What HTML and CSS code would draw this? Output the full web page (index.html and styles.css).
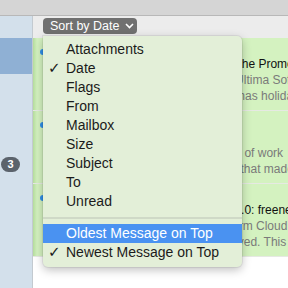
FILE: index.html
```html
<!DOCTYPE html>
<html lang="en">
<head>
  <meta charset="UTF-8">
  <title>Mail - Sort menu</title>
  <link rel="stylesheet" href="styles.css">
</head>
<body>
  <div class="titlebar"></div>
  <div class="main">
    <div class="sidebar">
      <div class="side-top"></div>
      <div class="side-sel"></div>
      <div class="side-gap"></div>
      <div class="side-row"><span class="badge">3</span></div>
    </div>
    <div class="content">
      <div class="toolbar">
        <button class="sort-btn">Sort by Date
          <svg width="9" height="6" viewBox="0 0 9 6"><path d="M1 1 L4.5 4.5 L8 1" fill="none" stroke="#fff" stroke-width="1.6"/></svg>
        </button>
      </div>
      <div class="list">
        <div class="row">
          <span class="dot"></span>
          <div class="lines">
            <div class="ln">Ultima Software</div>
            <div class="ln title">Christmas Holiday Deals - Join the Promotion</div>
            <div class="ln sub">Best wishes from the teams at Ultima Software</div>
            <div class="ln sub">Our store is open for the Christmas holidays</div>
          </div>
        </div>
        <div class="row">
          <span class="dot"></span>
          <div class="lines">
            <div class="ln">Team</div>
            <div class="ln title">Weekly</div>
            <div class="ln sub">The short summary of this week of work</div>
            <div class="ln sub">and a look at all of the changes that made it</div>
          </div>
        </div>
        <div class="row">
          <span class="dot"></span>
          <div class="lines">
            <div class="ln">Newsletter</div>
            <div class="ln title">New release notes for Version 8.0: freenet</div>
            <div class="ln sub">Your latest news from the platform Cloud</div>
            <div class="ln sub">Many settings have been improved. This is</div>
          </div>
        </div>
      </div>
    </div>
  </div>

  <div class="menu">
    <div class="item">Attachments</div>
    <div class="item checked">Date</div>
    <div class="item">Flags</div>
    <div class="item">From</div>
    <div class="item">Mailbox</div>
    <div class="item">Size</div>
    <div class="item">Subject</div>
    <div class="item">To</div>
    <div class="item">Unread</div>
    <div class="sep"></div>
    <div class="item active">Oldest Message on Top</div>
    <div class="item checked">Newest Message on Top</div>
  </div>
</body>
</html>
```

FILE: styles.css
```css
* { box-sizing: border-box; margin: 0; padding: 0; }
body {
  width: 288px;
  height: 288px;
  overflow: hidden;
  font-family: "Liberation Sans", Arial, sans-serif;
  background: #fff;
  position: relative;
}
.titlebar {
  height: 16px;
  background: #d5d5d5;
  border-bottom: 1px solid #b8b8b8;
}
.main {
  display: flex;
  height: 272px;
}
.sidebar {
  width: 33px;
  background: #d3e0eb;
  border-right: 1px solid #c3cad0;
  display: flex;
  flex-direction: column;
}
.side-top { height: 22px; }
.side-sel { height: 36px; background: #8fb0d4; }
.side-gap { height: 83px; }
.side-row { display: flex; }
.badge {
  margin-left: 1px;
  width: 19px;
  height: 15px;
  border-radius: 8px;
  background: #5b636c;
  color: #fff;
  font-size: 11px;
  font-weight: bold;
  line-height: 15px;
  text-align: center;
}
.content {
  flex: 1;
  display: flex;
  flex-direction: column;
  overflow: hidden;
}
.toolbar {
  height: 22px;
  background: #ececec;
  padding: 2px 0 0 10px;
}
.sort-btn {
  height: 16px;
  width: 94px;
  border: none;
  border-radius: 4px;
  background: #707070;
  color: #fff;
  font-family: inherit;
  font-size: 12.5px;
  padding: 0 0 0 7px;
  display: flex;
  align-items: center;
  gap: 6px;
}
.list {
  background: #d4f2c0;
  background-image: linear-gradient(to right, #b4dc9c 0, #d4f2c0 4px);
}
.row {
  height: 73px;
  display: flex;
  border-bottom: 1px solid #e6e9e3;
  overflow: hidden;
}
.dot {
  width: 6px;
  height: 6px;
  border-radius: 50%;
  background: #2f8fe8;
  margin: 11px 0 0 7px;
  flex: none;
}
.lines {
  padding: 2px 0 0 25px;
  white-space: nowrap;
  font-size: 12px;
  line-height: 16px;
  color: #111;
}
.sub { color: #7a7a7a; }
.menu {
  position: absolute;
  left: 43px;
  top: 36px;
  width: 199px;
  padding: 4px 0 5px;
  background: #e3efd8;
  border-radius: 0 5px 5px 5px;
  box-shadow: 0 3px 10px rgba(0,0,0,0.25), 0 0 0 1px rgba(0,0,0,0.06);
}
.item {
  height: 19px;
  line-height: 19px;
  font-size: 14px;
  color: #1b1b1b;
  padding-left: 23px;
  position: relative;
}
.checked::before {
  content: "\2713";
  position: absolute;
  left: 5px;
  font-size: 15px;
  font-family: "DejaVu Sans", sans-serif;
}
.active {
  background: #4a92f1;
  color: #fff;
}
.sep {
  height: 2px;
  background: #cfd9c7;
  margin: 6px 0 5px;
}
```
